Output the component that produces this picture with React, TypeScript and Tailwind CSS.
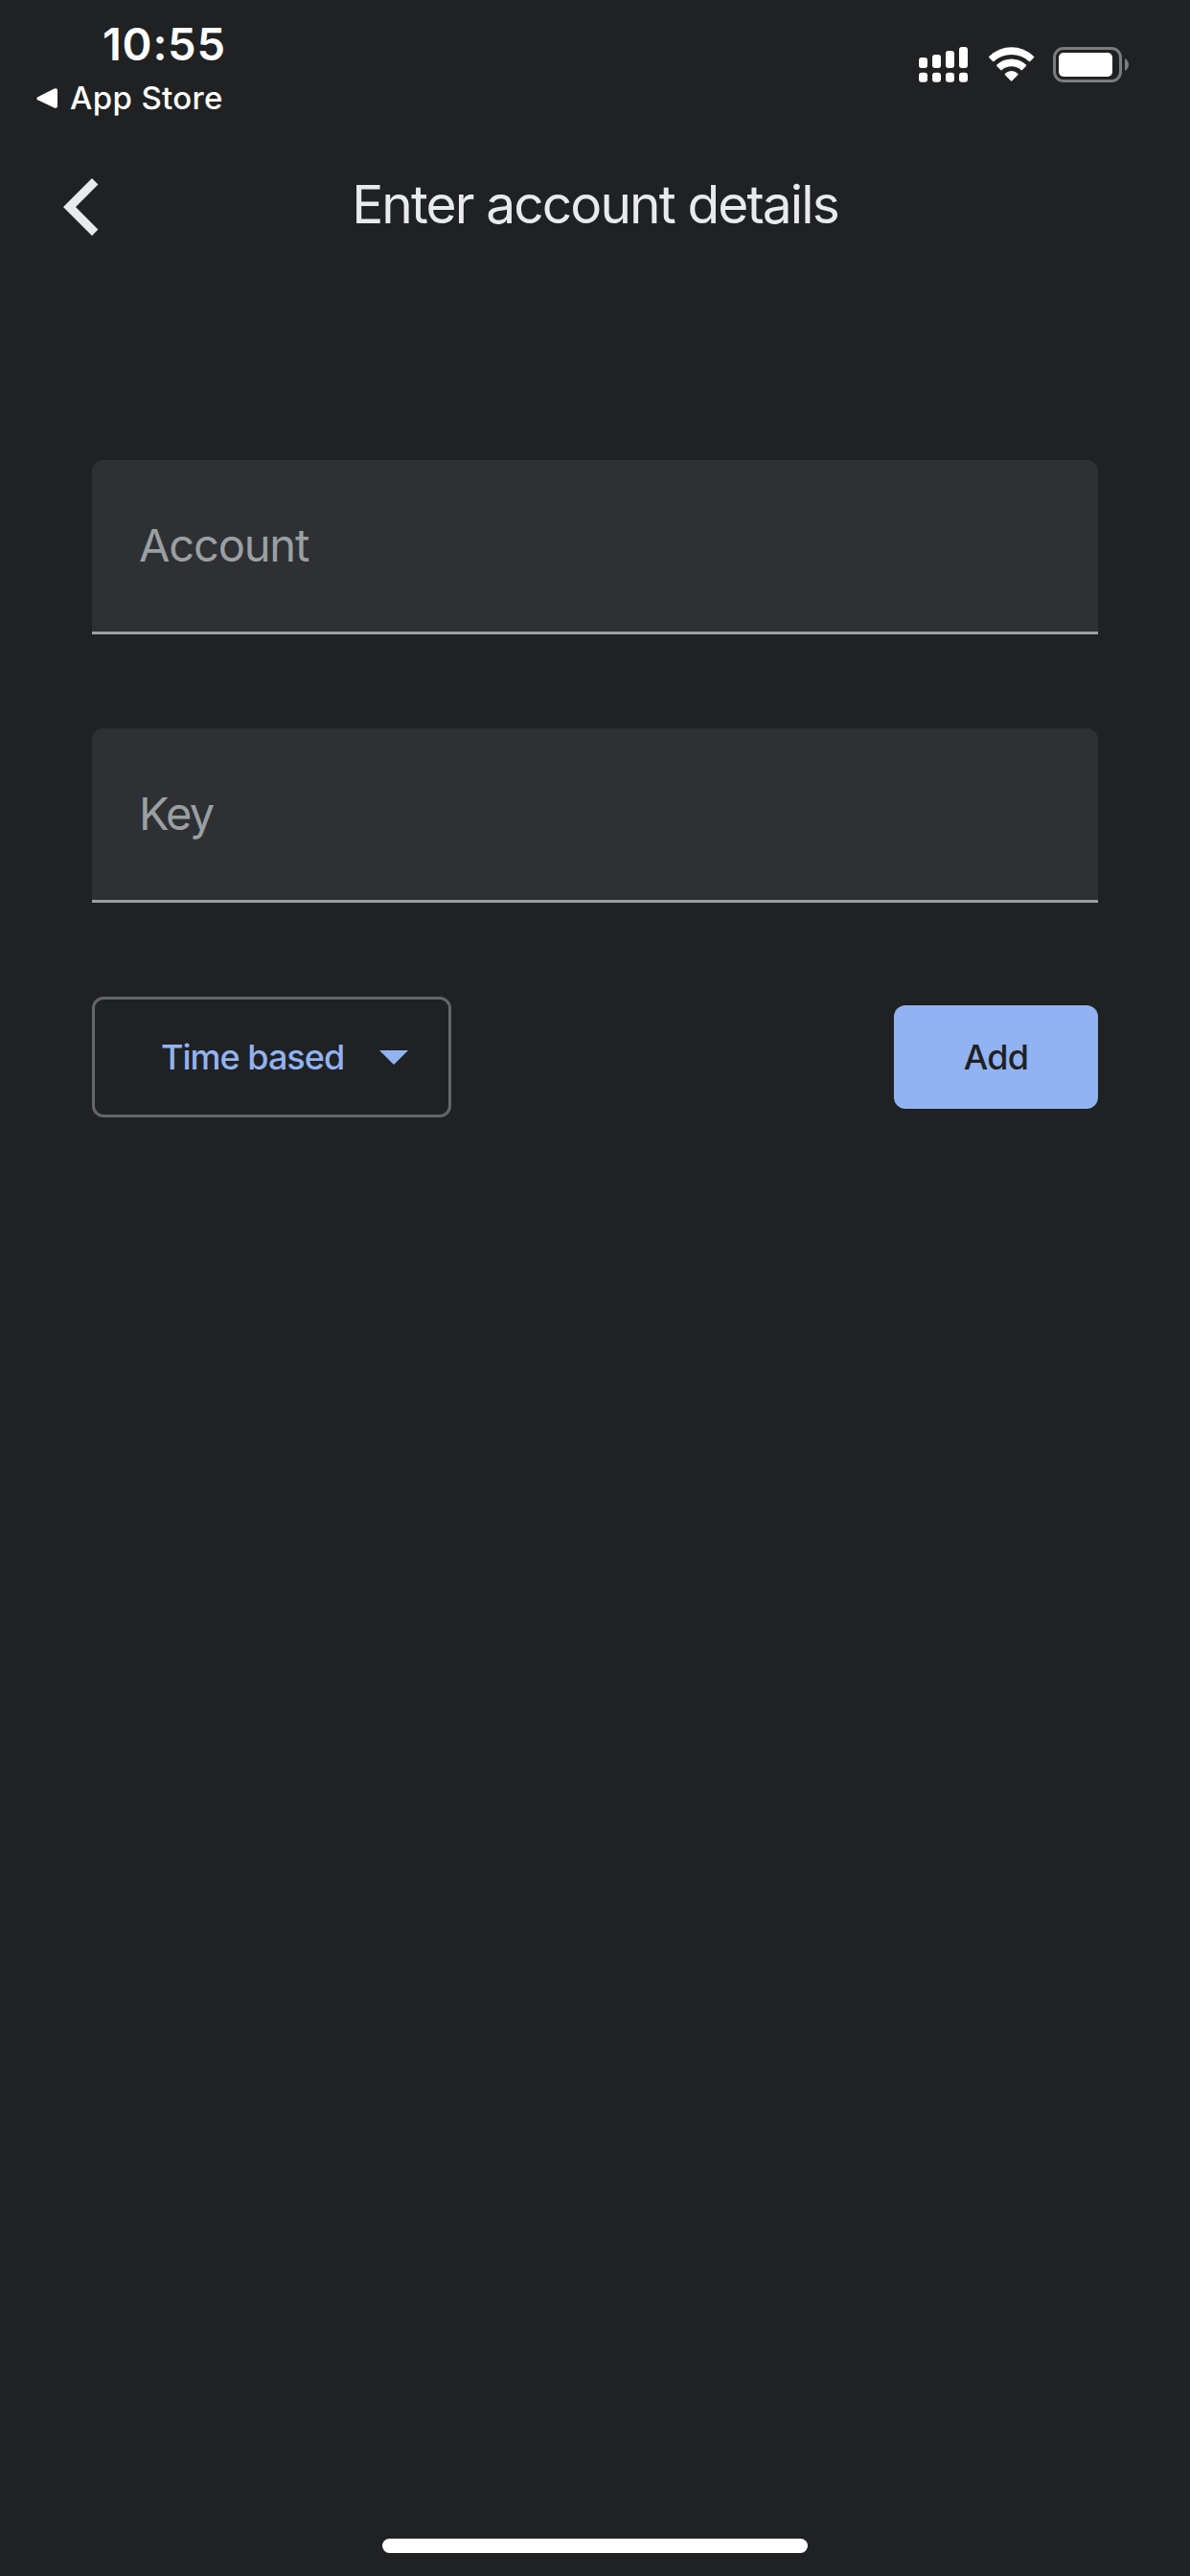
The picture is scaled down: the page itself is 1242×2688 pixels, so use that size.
import React from "react";

function SignalIcon() {
  const bars = [
    { x: 0, y: 11 },
    { x: 14, y: 8 },
    { x: 28, y: 4 },
    { x: 42, y: 0 },
  ];
  return (
    <svg width="51" height="37" viewBox="0 0 51 37" fill="white" aria-hidden="true">
      {bars.map((b) => (
        <React.Fragment key={b.x}>
          <rect x={b.x} y={b.y} width="9" height={22 - b.y} rx="3" />
          <rect x={b.x} y="26.8" width="9" height="10" rx="3" />
        </React.Fragment>
      ))}
    </svg>
  );
}

function WifiIcon() {
  return (
    <svg width="48" height="37" viewBox="0 0 48 37" fill="white" aria-hidden="true">
      <path d="M0.4 9.8A33 33 0 0 1 46.9 9.8Q47.6 10.5 46.9 11.2L43.2 14.9Q42.5 15.6 41.8 14.9A27.5 27.5 0 0 0 5.5 14.9Q4.8 15.6 4.1 14.9L0.4 11.2Q-0.3 10.5 0.4 9.8Z" />
      <path d="M8.4 18.6A22 22 0 0 1 38.9 18.6Q39.6 19.3 38.9 20L35 23.9Q34.3 24.6 33.6 23.9A15.5 15.5 0 0 0 13.7 23.9Q13 24.6 12.3 23.9L8.4 20Q7.7 19.3 8.4 18.6Z" />
      <path d="M17 27.8A9.5 9.5 0 0 1 30.3 27.8Q31 28.5 30.3 29.2L24.4 35.2Q23.65 35.9 22.9 35.2L17 29.2Q16.3 28.5 17 27.8Z" />
    </svg>
  );
}

function BatteryIcon() {
  return (
    <svg width="79" height="37" viewBox="0 0 79 37" aria-hidden="true">
      <rect x="1.5" y="1.5" width="69" height="34" rx="9.5" fill="none" stroke="#7b7c7e" strokeWidth="3" />
      <rect x="6" y="6" width="56" height="25" rx="5" fill="white" />
      <path d="M75 12Q79 14.5 79 18.5Q79 22.5 75 25Z" fill="#7b7c7e" />
    </svg>
  );
}

function StatusBar() {
  return (
    <header className="flex h-[132px] items-start justify-between pr-[64px] text-white">
      <div className="flex flex-col pl-[38px] pt-[22px]">
        <span className="ml-[69px] text-[47px] leading-none font-semibold tracking-[0.75px]">10:55</span>
        <div className="mt-[17px] flex items-center">
          <svg className="mr-[13px]" width="22" height="22" viewBox="0 0 22 22" fill="white" aria-hidden="true">
            <path d="M1.4 9.2L18.6 0.6Q22 -0.6 22 2.6V18.4Q22 21.6 18.6 20.4L1.4 12.2Q-0.8 10.7 1.4 9.2Z" />
          </svg>
          <span className="text-[33px] leading-none font-medium tracking-[0.35px]">App Store</span>
        </div>
      </div>
      <div className="flex pt-[49px]">
        <SignalIcon />
        <div className="ml-[22px] flex">
          <WifiIcon />
        </div>
        <div className="ml-[19px] flex">
          <BatteryIcon />
        </div>
      </div>
    </header>
  );
}

function Field({ label, tracking }: { label: string; tracking: string }) {
  return (
    <div className="flex h-[182px] items-start rounded-t-[12px] border-b-[3px] border-[#9aa0a2] bg-[#2f3034] pt-[65px] pl-[49px]">
      <span className={`text-[47px] leading-none text-[#9aa0a2] ${tracking}`}>{label}</span>
    </div>
  );
}

export default function App() {
  return (
    <main className="flex h-[2688px] w-[1242px] flex-col bg-[#202123] font-['Inter',sans-serif]">
      <StatusBar />
      <nav className="grid h-[168px] grid-cols-[103px_1fr_103px] items-start pt-[54px]">
        <button className="flex pl-[66px]" aria-label="Back">
          <svg className="shrink-0" width="37" height="60" viewBox="0 0 37 60" fill="#e8eaed" aria-hidden="true">
            <path d="M30 0L36.4 6.4L13 30L36.4 53.6L30 60L0 30Z" />
          </svg>
        </button>
        <h1 className="text-center text-[55px] leading-[55px] tracking-[-1.87px] text-[#e8eaed]">
          Enter account details
        </h1>
      </nav>
      <section className="flex flex-col px-[96px] pt-[180px]">
        <Field label="Account" tracking="tracking-[-1.15px]" />
        <div className="h-[98px]" />
        <Field label="Key" tracking="tracking-[-1.7px]" />
        <div className="mt-[98px] flex items-center justify-between">
          <button className="flex h-[126px] w-[375px] items-center rounded-[12px] border-[3px] border-[#646569] pl-[69px]">
            <span className="text-[36px] leading-none font-medium tracking-[-1px] whitespace-nowrap text-[#91b3f2]">
              Time based
            </span>
            <svg className="ml-[37px]" width="30" height="15" viewBox="0 0 30 15" fill="#91b3f2" aria-hidden="true">
              <path d="M0 0H30L15 15Z" />
            </svg>
          </button>
          <button className="flex h-[108px] w-[213px] items-center justify-center rounded-[12px] bg-[#91b3f2] text-[36px] leading-none font-medium tracking-[-0.8px] text-[#202124]">
            Add
          </button>
        </div>
      </section>
      <div className="mt-auto mb-[24px] h-[15px] w-[444px] self-center rounded-full bg-white" />
    </main>
  );
}
